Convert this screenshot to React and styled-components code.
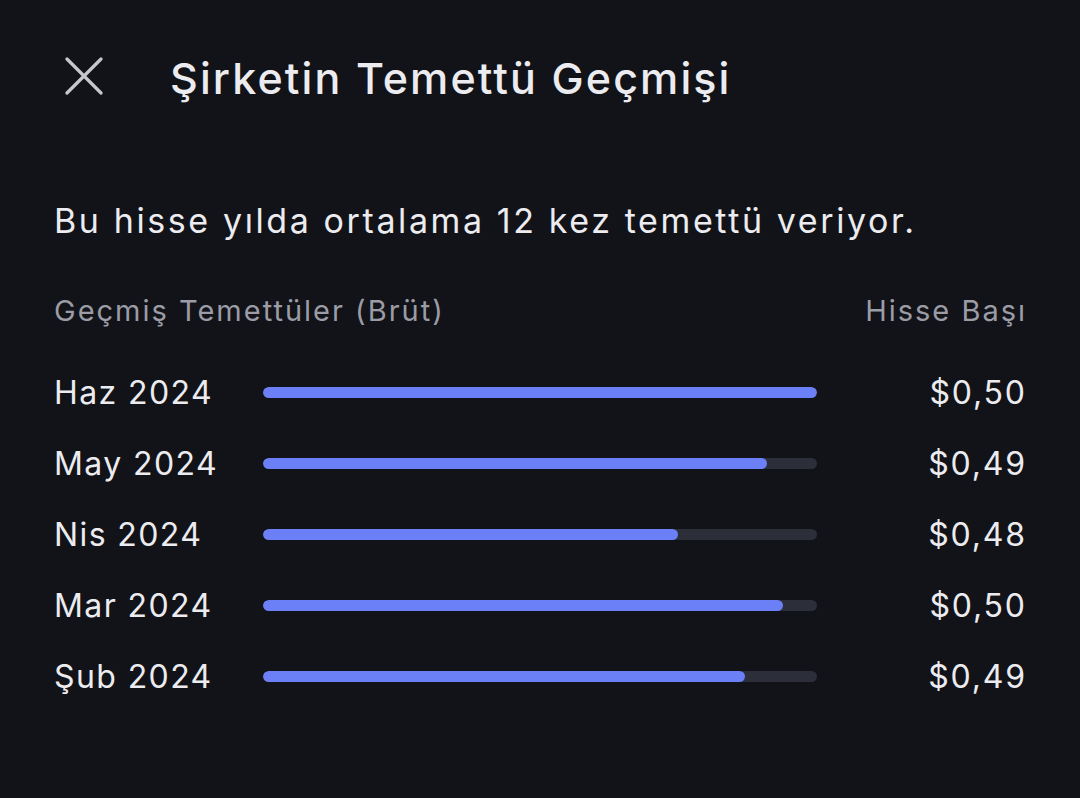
import React from "react";
import styled, { createGlobalStyle } from "styled-components";

const Global = createGlobalStyle`
  html, body { margin: 0; padding: 0; background: #121318; }
  body { font-family: Inter, "Noto Sans", sans-serif; -webkit-font-smoothing: antialiased; }
`;

const Page = styled.div`
  width: 1080px;
  height: 798px;
  background: #121318;
  box-sizing: border-box;
  padding: 0 55px 0 54px;
  color: #ececf0;
`;

const Header = styled.div`
  display: flex;
  align-items: center;
  height: 156px;
  padding-left: 10px;
  gap: 66px;
`;

const CloseButton = styled.button`
  background: none;
  border: none;
  padding: 0;
  width: 40px;
  height: 40px;
  display: flex;
  align-items: center;
  justify-content: center;
  color: #c6c6cc;
  margin-top: -4px;
`;

const Title = styled.h1`
  margin: 0;
  font-size: 43px;
  font-weight: 500;
  color: #ececf0;
  letter-spacing: 2.1px;
`;

const Summary = styled.p`
  margin: 45px 0 0;
  font-size: 34px;
  font-weight: 400;
  line-height: 40px;
  letter-spacing: 2.6px;
  color: #ececf0;
`;

const TableHead = styled.div`
  display: flex;
  justify-content: space-between;
  margin-top: 52px;
  font-size: 29px;
  line-height: 36px;
  letter-spacing: 2px;
  color: #9b9ca6;
  & > span:last-child { margin-right: -2px; }
`;

const Rows = styled.div`
  display: flex;
  flex-direction: column;
  margin-top: 28px;
`;

const Row = styled.div`
  display: grid;
  grid-template-columns: 209px 554px 1fr;
  align-items: center;
  height: 71px;
`;

const Label = styled.span`
  font-size: 32px;
  letter-spacing: 1.4px;
  color: #ececf0;
`;

const Track = styled.div`
  height: 11px;
  border-radius: 6px;
  background: #2c2e39;
  overflow: hidden;
`;

const Fill = styled.div`
  height: 100%;
  border-radius: 6px;
  background: #6b7ff6;
`;

const Value = styled.span`
  font-size: 32px;
  letter-spacing: 1.8px;
  margin-right: -1.8px;
  text-align: right;
  color: #ececf0;
`;

const data = [
  { label: "Haz 2024", value: "$0,50", pct: 100 },
  { label: "May 2024", value: "$0,49", pct: 91 },
  { label: "Nis 2024", value: "$0,48", pct: 74.9 },
  { label: "Mar 2024", value: "$0,50", pct: 93.9 },
  { label: "Şub 2024", value: "$0,49", pct: 87 },
];

export default function App() {
  return (
    <>
      <Global />
      <Page>
        <Header>
          <CloseButton aria-label="Kapat">
            <svg width="38" height="38" viewBox="0 0 38 38" fill="none" stroke="currentColor" strokeWidth="3.2" strokeLinecap="round">
              <path d="M2 2 L36 36 M36 2 L2 36" />
            </svg>
          </CloseButton>
          <Title>Şirketin Temettü Geçmişi</Title>
        </Header>
        <Summary>Bu hisse yılda ortalama 12 kez temettü veriyor.</Summary>
        <TableHead>
          <span>Geçmiş Temettüler (Brüt)</span>
          <span>Hisse Başı</span>
        </TableHead>
        <Rows>
          {data.map((d) => (
            <Row key={d.label}>
              <Label>{d.label}</Label>
              <Track>
                <Fill style={{ width: `${d.pct}%` }} />
              </Track>
              <Value>{d.value}</Value>
            </Row>
          ))}
        </Rows>
      </Page>
    </>
  );
}
